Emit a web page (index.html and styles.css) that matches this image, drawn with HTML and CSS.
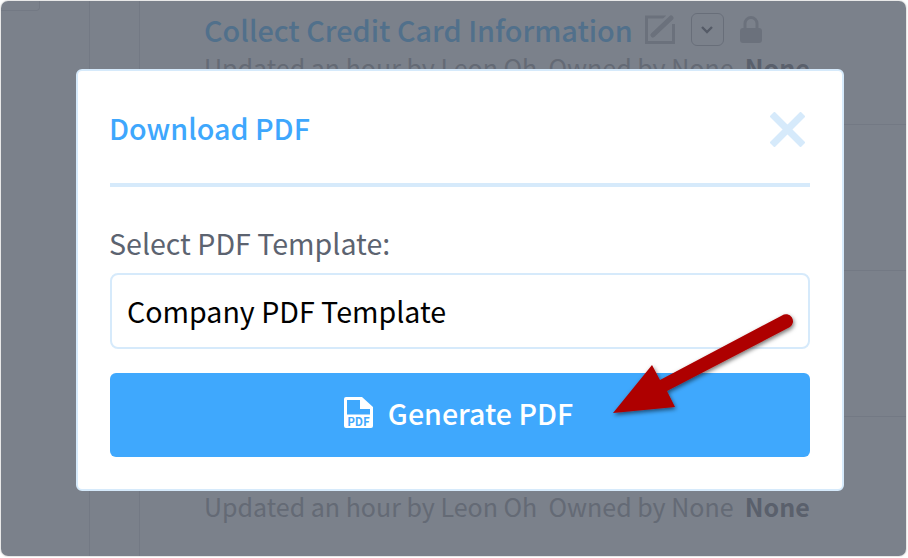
FILE: index.html
```html
<!DOCTYPE html>
<html lang="en">
<head>
    <meta charset="UTF-8">
    <title>Download PDF</title>
    <link rel="stylesheet" href="styles.css">
</head>
<body>
    <div class="window">
        <div class="page">
            <div class="rail">
                <div class="rail-tab"></div>
            </div>
            <div class="rail-thin"></div>
            <div class="list">
                <div class="row row-first">
                    <div class="row-title">
                        <span class="title-text">Collect Credit Card Information</span>
                        <svg class="edit-icon" width="30" height="29" viewBox="0 0 30 29">
                            <path d="M21 2H1.500V27.500H28.500V9" fill="none" stroke="#d7d7d9" stroke-width="3"/>
                            <path d="M8 20L26 3" fill="none" stroke="#fff" stroke-width="10"/>
                            <path d="M8 20L26 3" fill="none" stroke="#d7d7d9" stroke-width="5" stroke-linecap="round"/>
                        </svg>
                        <span class="chevron-box">
                            <svg width="12" height="8" viewBox="0 0 12 8"><path d="M1 1l5 5 5-5" fill="none" stroke="#a0a0a5" stroke-width="2.4"/></svg>
                        </span>
                        <svg class="lock-icon" width="22" height="27" viewBox="0 0 22 27">
                            <path d="M5 13V7.500a6 6 0 0 1 12 0V13" fill="none" stroke="#d7d7d9" stroke-width="3"/>
                            <rect x="0" y="12" width="22" height="15" rx="3" fill="#d7d7d9"/>
                        </svg>
                    </div>
                    <p class="row-meta">Updated an hour by Leon Oh&nbsp; Owned by None&nbsp; <b>None</b></p>
                </div>
                <div class="row"></div>
                <div class="row"></div>
                <div class="row row-last">
                    <p class="row-meta">Updated an hour by Leon Oh&nbsp; Owned by None&nbsp; <b>None</b></p>
                </div>
            </div>
        </div>
        <div class="overlay">
            <div class="modal">
                <div class="modal-head">
                    <h2>Download PDF</h2>
                    <svg class="close-icon" width="35" height="35" viewBox="0 0 35 35">
                        <path d="M2 2l31 31M33 2L2 33" stroke="#d6eafb" stroke-width="7" fill="none"/>
                    </svg>
                </div>
                <label class="field-label" for="template">Select PDF Template:</label>
                <div class="select-box" id="template">Company PDF Template</div>
                <button class="generate-btn">
                    <svg width="29" height="31" viewBox="0 0 29 31">
                        <path fill="#fff" fill-rule="evenodd" d="M2 0h16l11 10v19a2 2 0 0 1-2 2H2a2 2 0 0 1-2-2V2a2 2 0 0 1 2-2zM3 3v14.500h23V12H16V3z"/>
                        <text class="pdf-mark" x="14.500" y="28.500" text-anchor="middle">PDF</text>
                    </svg>
                    Generate PDF
                </button>
            </div>
            <svg class="arrow" width="190" height="115" viewBox="0 0 190 115">
                <defs>
                    <filter id="arrow-shadow" x="-10%" y="-10%" width="125%" height="130%">
                        <feDropShadow dx="1" dy="2" stdDeviation="2" flood-color="#000" flood-opacity="0.55"/>
                    </filter>
                </defs>
                <path filter="url(#arrow-shadow)" fill="#ae0000" d="M4 102L43 54L51 69L173 4.500A6.500 6.500 0 0 1 181 16L58 80L66 96Z"/>
            </svg>
        </div>
    </div>
</body>
</html>
```

FILE: styles.css
```css
body {
    margin: 0;
    background-color: #fff;
    font-family: "Noto Sans CJK SC", "Noto Sans", sans-serif;
}
.window {
    position: relative;
    width: 905px;
    height: 555px;
    margin: 1px;
    border-radius: 7px;
    overflow: hidden;
    background-color: #fff;
    box-shadow: 0 0 2px rgba(0, 0, 0, 0.35);
}
.page {
    display: flex;
    height: 100%;
    background-color: #fff;
}
.rail {
    width: 88px;
    flex-shrink: 0;
    border-right: 1px solid #ebebed;
}
.rail-tab {
    width: 38px;
    height: 9px;
    border: 1px solid #ebebed;
    border-top: none;
    border-left: none;
    border-radius: 0 0 4px 0;
}
.rail-thin {
    width: 49px;
    flex-shrink: 0;
    border-right: 1px solid #ebebed;
}
.list {
    flex: 1;
    display: flex;
    flex-direction: column;
}
.row {
    height: 145px;
    padding-left: 64px;
    border-bottom: 1px solid #ebebed;
}
.row-first {
    height: 123px;
}
.row-last {
    height: auto;
    flex: 1;
    border-bottom: none;
    padding-top: 77px;
}
.row-title {
    display: flex;
    align-items: center;
    height: 51px;
    padding-top: 3px;
}
.title-text {
    font-size: 28.800px;
    font-weight: 500;
    color: #96d4ff;
}
.edit-icon {
    margin-left: 12px;
}
.chevron-box {
    display: flex;
    align-items: center;
    justify-content: center;
    width: 31px;
    height: 31px;
    margin-left: 16px;
    border: 1px solid #d0d0d3;
    border-radius: 6px;
}
.lock-icon {
    margin-left: 16px;
}
.row-meta {
    margin: 0;
    font-size: 25px;
    line-height: 24px;
    color: #c5c5c8;
}
.row-meta b {
    font-weight: 700;
    color: #acacb1;
}
.overlay {
    position: absolute;
    top: 0;
    left: 0;
    right: 0;
    bottom: 0;
    background-color: rgba(35, 45, 62, 0.6);
}
.modal {
    position: absolute;
    top: 68px;
    left: 75px;
    width: 768px;
    height: 422px;
    box-sizing: border-box;
    padding: 0 32px;
    background-color: #fff;
    border: 2px solid #d6eafb;
    border-radius: 6px;
}
.modal-head {
    display: flex;
    justify-content: space-between;
    align-items: center;
    height: 107px;
    padding-top: 5px;
    border-bottom: 4px solid #d6eafb;
}
.modal-head h2 {
    margin: 0 0 4px -1px;
    font-size: 28.700px;
    font-weight: 500;
    color: #3ea7fd;
}
.close-icon {
    margin-right: 5px;
}
.field-label {
    display: block;
    margin: 36px 0 0 -1px;
    font-size: 28.600px;
    line-height: 40px;
    color: #5c6370;
}
.select-box {
    height: 72px;
    margin-top: 10px;
    padding-left: 15px;
    font-size: 28.600px;
    line-height: 72px;
    color: #000;
    border: 2px solid #d6eafb;
    border-radius: 8px;
}
.generate-btn {
    display: flex;
    align-items: center;
    justify-content: center;
    gap: 15px;
    width: 100%;
    height: 84px;
    margin-top: 24px;
    padding: 0 3px 5px 0;
    font-family: inherit;
    font-size: 28.600px;
    font-weight: 500;
    color: #fff;
    background-color: #3fa8fd;
    border: none;
    border-radius: 6px;
}
.pdf-mark {
    font-size: 11.500px;
    font-weight: 700;
    fill: #3fa8fd;
}
.arrow {
    position: absolute;
    top: 310px;
    left: 608px;
}
```
